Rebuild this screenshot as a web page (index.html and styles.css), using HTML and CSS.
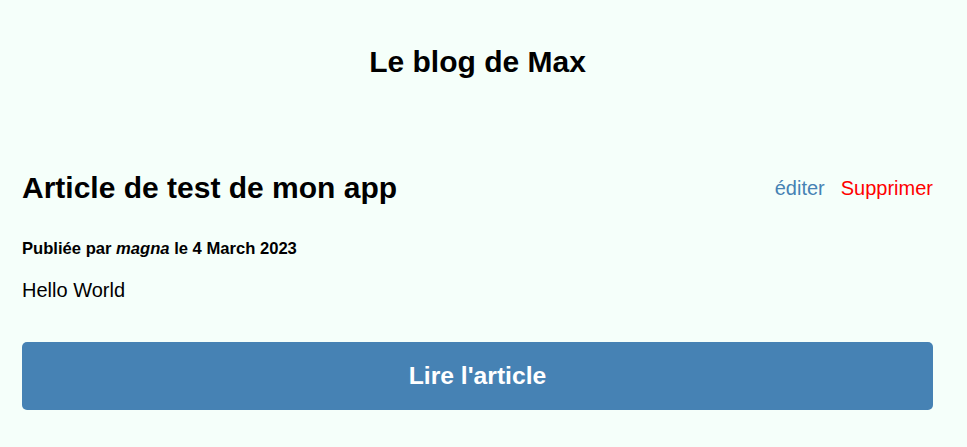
FILE: index.html
```html
<!DOCTYPE html>
<html lang="fr">
<head>
<meta charset="utf-8">
<link rel="stylesheet" href="styles.css">
</head>
<body>
<div class="page">
  <header class="site-header">
    <h1 class="site-title">Le blog de Max</h1>
  </header>
  <main class="posts">
    <article class="post">
      <div class="post-head">
        <h2 class="post-title">Article de test de mon app</h2>
        <div class="post-actions">
          <a class="edit" href="#">éditer</a>
          <a class="delete" href="#">Supprimer</a>
        </div>
      </div>
      <p class="post-meta">Publiée par <em>magna</em> le 4 March 2023</p>
      <p class="post-body">Hello World</p>
      <a class="read-btn" href="#">Lire l'article</a>
    </article>
  </main>
</div>
</body>
</html>
```
FILE: styles.css
```css
html, body {
  margin: 0;
  padding: 0;
  background: #f5fffa;
  font-family: "Liberation Sans", Arial, sans-serif;
  color: #000;
}
.page {
  padding: 44px 34px 0 22px;
}
.site-header {
  display: flex;
  justify-content: center;
}
.site-title {
  margin: 0;
  font-size: 30px;
  line-height: 36px;
  font-weight: bold;
}
.posts {
  margin-top: 90px;
}
.post-head {
  display: flex;
  justify-content: space-between;
  align-items: center;
}
.post-title {
  margin: 0;
  font-size: 30px;
  line-height: 36px;
  font-weight: bold;
}
.post-actions {
  display: flex;
  gap: 16px;
  font-size: 20px;
}
.post-actions a { text-decoration: none; }
.edit { color: #4682b4; }
.delete { color: red; }
.post-meta {
  margin: 33px 0 0;
  font-size: 16.6px;
  line-height: 20px;
  font-weight: bold;
}
.post-body {
  margin: 19px 0 0;
  font-size: 20px;
  line-height: 24px;
}
.read-btn {
  display: flex;
  justify-content: center;
  align-items: center;
  margin-top: 40px;
  height: 68px;
  background: #4682b4;
  color: #fff;
  border-radius: 5px;
  font-size: 24.7px;
  font-weight: bold;
  text-decoration: none;
}
```
